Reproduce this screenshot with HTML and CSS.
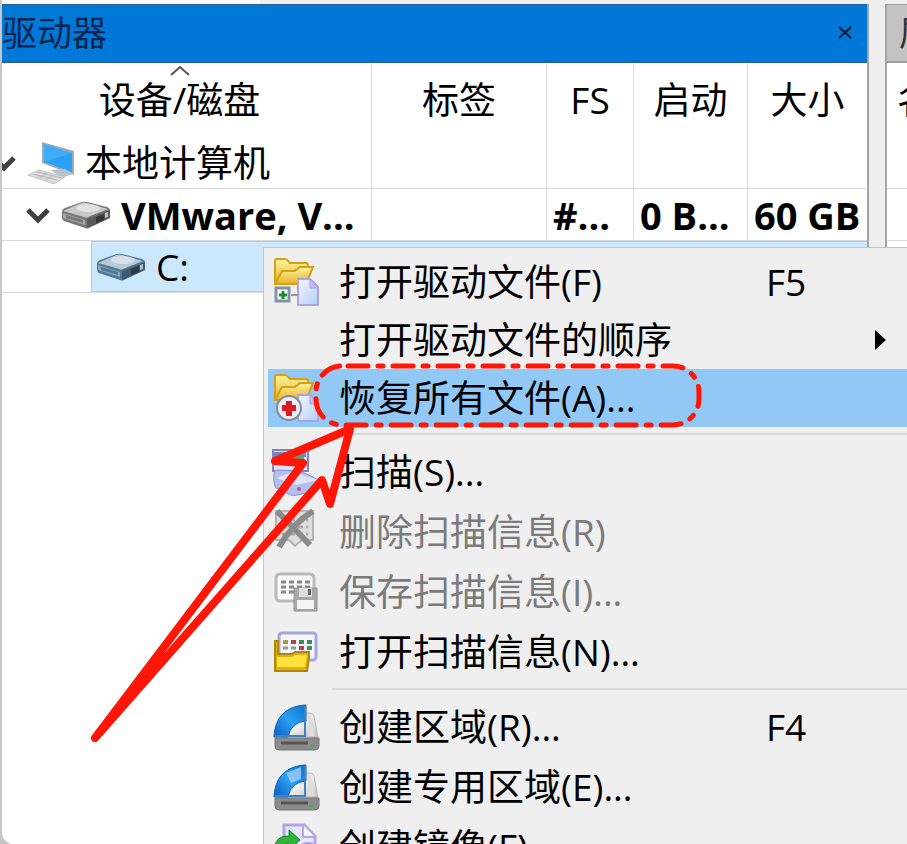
FILE: index.html
```html
<!DOCTYPE html>
<html lang="zh-CN">
<head>
<meta charset="utf-8">
<title>驱动器</title>
<link rel="stylesheet" href="styles.css">
</head>
<body>
<svg class="defs" aria-hidden="true">
  <defs>
    <linearGradient id="gold" x1="0" y1="0" x2="0" y2="1"><stop offset="0" stop-color="#fff3a0"/><stop offset="1" stop-color="#e6b325"/></linearGradient>
    <linearGradient id="paper" x1="0" y1="0" x2="1" y2="1"><stop offset="0" stop-color="#f4f6ff"/><stop offset="1" stop-color="#b4cdf5"/></linearGradient>
    <linearGradient id="blue" x1="0" y1="1" x2="1" y2="0"><stop offset="0" stop-color="#0a5cc0"/><stop offset=".5" stop-color="#2ba0f2"/><stop offset="1" stop-color="#0a6fd0"/></linearGradient>
    <linearGradient id="steel" x1="0" y1="0" x2="1" y2="1"><stop offset="0" stop-color="#a8a8a8"/><stop offset=".5" stop-color="#f0f0f0"/><stop offset="1" stop-color="#bcbcbc"/></linearGradient>
    <symbol id="drive" viewBox="0 0 50 28">
      <path d="M1 11Q1 8 4 7L18 2Q22 0 26 1L46 6Q49 7 49 9V17L28 27Q26 28 24 27L3 20Q1 19 1 17Z" fill="currentColor"/>
      <path d="M2 10 20 2Q23 1 26 2L47 8 27 16Q25 17 23 16Z" fill="#fff" fill-opacity=".6"/>
      <ellipse cx="27" cy="7" rx="12" ry="4" fill="#fff" fill-opacity=".45"/>
      <path d="m2 12 22 7v5L2 17Z" fill="#fff" fill-opacity=".35"/>
      <path d="m5 14 17 5v3L5 17Z" fill="currentColor"/>
      <path d="m26 18 23-9v8l-23 10Z" fill="#222" fill-opacity=".35"/>
      <path d="m35 16 8-3v6l-8 3Z" fill="#222" fill-opacity=".6"/>
      <path d="m44 12 3-1v5l-3 1Z" fill="#fff" fill-opacity=".6"/>
    </symbol>
    <symbol id="folder" viewBox="0 0 48 48">
      <path d="M3 25V3q0-2 2-2h8q2 0 3 2l2 2h16q2 0 2 3v6" fill="url(#gold)" stroke="#d4a017" stroke-width="2"/>
      <path d="M3 26 10 13h13l5-4h13l-7 17Z" fill="url(#gold)" stroke="#d4a017" stroke-width="2"/>
      <path d="M26 21h12l8 8v18H26Z" fill="url(#paper)" stroke="#a9a4e2" stroke-width="2" stroke-linejoin="round"/>
      <path d="m38 21 8 9h-8Z" fill="#c8b9f0" stroke="#a9a4e2"/>
    </symbol>
    <symbol id="region" viewBox="0 0 48 48">
      <path d="M7 35 14 12q1-2 3-2h21q3 0 4 3l4 22Z" fill="url(#steel)" stroke="#b6b6b6"/>
      <path d="M36 13h3l4 20h-7Z" fill="#ddd"/>
      <path d="M3 35h44v8q0 4-4 4H7q-4 0-4-4Z" fill="#8b8b8b" stroke="#777"/>
      <path d="M9 40h27" stroke="#555" stroke-width="3"/>
      <path d="M38 43h4" stroke="#35b548" stroke-width="2"/>
      <path d="M2 34C3 14 14 3 34 2V18Q19 19 16 34Z" fill="url(#blue)" stroke="#0b63bc" stroke-width="1"/>
      <path d="M33 3v30H3" fill="none" stroke="#3b83c3" stroke-width="2"/>
    </symbol>
  </defs>
</svg>
<main class="app">
  <section class="panel drives" aria-label="驱动器">
    <header class="title">
      <h1>驱动器</h1>
      <button class="close" aria-label="关闭"><svg width="16" height="16" viewBox="0 0 16 16"><path d="m2 2 12 11M14 2 2 13" stroke="#08152c" stroke-width="2"/></svg></button>
    </header>
    <table>
      <colgroup><col class="c-name"><col class="c-label"><col class="c-fs"><col class="c-boot"><col class="c-size"></colgroup>
      <thead>
        <tr>
          <th><svg class="sort" width="20" height="11" viewBox="0 0 20 11"><path d="m1 10 9-8 9 8" fill="none" stroke="#555" stroke-width="2"/></svg>设备/磁盘</th>
          <th>标签</th><th>FS</th><th>启动</th><th>大小</th>
        </tr>
      </thead>
      <tbody>
        <tr>
          <td><div class="node root">
            <svg class="chev" width="26" height="18" viewBox="0 0 26 18"><path d="m3 4 10 10L23 4" fill="none" stroke="#404040" stroke-width="5"/></svg>
            <svg width="48" height="44" viewBox="0 0 48 44">
              <path d="M15 1 47 10v24L15 22Z" fill="#9fa9b3"/>
              <path d="m17 3 28 9v19L17 21Z" fill="#2aa0f5"/>
              <path d="m17 3 28 9-28 9Z" fill="#62bdfc" fill-opacity=".4"/>
              <path d="m24 29 14-1 8 5-12 4Z" fill="#b6c4ce"/>
              <path d="m1 34 11-5 26 7-11 7Z" fill="#dcdcdc" stroke="#c4c4c4"/>
              <path d="m6 33 24 6m-20-8 25 6M12 37l8-5m-1 7 8-5" stroke="#b8b8b8" stroke-width="1"/>
            </svg>
            <span>本地计算机</span></div></td>
          <td></td><td></td><td></td><td></td>
        </tr>
        <tr class="disk">
          <td><div class="node disk-node">
            <svg class="chev" width="26" height="18" viewBox="0 0 26 18"><path d="m3 4 10 10L23 4" fill="none" stroke="#404040" stroke-width="5"/></svg>
            <svg class="gray" width="50" height="28"><use href="#drive"/></svg>
            <span>VMware, V...</span></div></td>
          <td></td><td>#...</td><td>0 B...</td><td>60 GB</td>
        </tr>
        <tr class="selected">
          <td><div class="node volume">
            <svg class="steel" width="50" height="28"><use href="#drive"/></svg>
            <span>C:</span></div></td>
          <td></td><td></td><td></td><td></td>
        </tr>
      </tbody>
    </table>
  </section>
  <section class="panel props" aria-label="属性">
    <header class="title"><h2>属性</h2></header>
    <div class="prop-head">名称</div>
    <div class="prop-row"></div>
  </section>

  <menu class="context">
    <li class="tight"><button><svg width="48" height="48" viewBox="0 0 48 48"><use href="#folder"/><path d="M4 30h13v13H4Z" fill="#fff" stroke="#8292a8" stroke-width="3"/><path d="M7 37h8m-4-4v8" stroke="#208a30" stroke-width="3"/><path d="M19 37h7" stroke="#999" stroke-width="2"/></svg><span>打开驱动文件(F)</span><kbd>F5</kbd></button></li>
    <li class="tight"><button><i></i><span>打开驱动文件的顺序</span><svg class="more" width="12" height="20" viewBox="0 0 12 20"><path d="M0 0 11 10 0 20Z"/></svg></button></li>
    <li class="tight"><button class="active"><svg width="48" height="48" viewBox="0 0 48 48"><use href="#folder"/><circle cx="17" cy="34" r="12" fill="#ececf2" stroke="#858ba5" stroke-width="2"/><path d="M14 27h6v4h4v6h-4v5h-6v-5h-4v-6h4Z" fill="#d81c20"/></svg><span>恢复所有文件(A)...</span></button></li>
    <li class="sep"></li>
    <li><button><svg width="48" height="48" viewBox="0 0 48 48"><path d="M1 2h35v21H1Z" fill="#dbe2fa" stroke="#8184b4" stroke-width="2"/><path d="M2 4h32v5H2Z" fill="#7384c5"/><path d="M20 10h12" stroke="#51a860" stroke-width="3"/><path d="M2 25q0-3 4-3l22 1 19 9q1 9-4 11l-22 5-17-8Q1 35 2 25Z" fill="#b3bfec" stroke="#8494ce"/><path d="m4 30 16-6 27 8-23 5Z" fill="#dde4fb"/><circle cx="27" cy="41" r="2" fill="#c65575"/></svg><span>扫描(S)...</span></button></li>
    <li><button disabled><svg width="48" height="48" viewBox="0 0 48 48"><path d="M4 3h37v29H30l-7 6-6-6H4Z" fill="#ddd" stroke="#b4b4b4" stroke-width="2"/><path d="M10 12h26M10 19h26M10 26h26" stroke="#aaa" stroke-width="3" stroke-dasharray="5 3"/><path d="M5 3 38 37M41 3Q20 16 7 39" fill="none" stroke="#8b8b8b" stroke-width="6"/></svg><span>删除扫描信息(R)</span></button></li>
    <li><button disabled><svg width="48" height="48" viewBox="0 0 48 48"><rect x="4" y="6" width="38" height="27" rx="4" fill="#f8f8f8" stroke="#bababa" stroke-width="3"/><path d="M9 14h29M9 19h29M9 24h15" stroke="#888" stroke-width="3" stroke-dasharray="5 3"/><path d="M22 20h23v23H22Z" fill="#a8a8a8" stroke="#929292"/><path d="M27 20h13v9H27Z" fill="#ddd"/><path d="M36 21h3v6h-3Z" fill="#666"/><path d="M25 32h17v9H25Z" fill="#f3f3f3"/></svg><span>保存扫描信息(I)...</span></button></li>
    <li><button><svg width="48" height="48" viewBox="0 0 48 48"><rect x="7" y="5" width="37" height="27" rx="3" fill="#f4f5ff" stroke="#a6a7dc" stroke-width="3"/><path d="M11 14h28" stroke="#b09a4a" stroke-width="4" stroke-dasharray="5 3"/><path d="M11 20h28" stroke="#999b74" stroke-width="3" stroke-dasharray="5 3"/><path d="M19 14h5m3 6h5" stroke="#b93e4b" stroke-width="4"/><path d="M27 14h5m3 0h5m-5 6h5" stroke="#359349" stroke-width="4"/><path d="M3 43V13h3v13h14l3-2h14v7l-2 12Z" fill="#e2b00b" stroke="#ad8713" stroke-width="2"/><path d="M5 29h15l3-2h12l-2 12H5Z" fill="#fce13d"/></svg><span>打开扫描信息(N)...</span></button></li>
    <li class="sep"></li>
    <li><button><svg width="48" height="48"><use href="#region"/></svg><span>创建区域(R)...</span><kbd>F4</kbd></button></li>
    <li><button><svg width="48" height="48" viewBox="0 0 48 48"><use href="#region"/><path d="M14 10 29 4v12l-10 4Z" fill="#a7d4fa" fill-opacity=".75"/></svg><span>创建专用区域(E)...</span></button></li>
    <li><button><svg width="48" height="48" viewBox="0 0 48 48"><path d="M12 2h20l11 11v33H12Z" fill="#e5e8ff" stroke="#b6a4e9" stroke-width="3"/><path d="M31 2v12h12" fill="#f8f5ff" stroke="#b6a4e9" stroke-width="2"/><circle cx="36" cy="32" r="12" fill="#d5ccf8" stroke="#a99be0" stroke-width="2"/><path d="M2 26Q4 12 17 13V7l11 10-11 10v-6q-8-1-11 9Z" fill="#30b43a" stroke="#15852a"/></svg><span>创建镜像(F)</span></button></li>
  </menu>

  <svg class="marks" width="720" height="760" viewBox="0 0 720 760" aria-hidden="true">
    <rect x="316" y="366" width="383" height="59" rx="26" stroke-width="5" stroke-dasharray="20 10 5 10" stroke-dashoffset="-6"/>
    <path d="M95 738 303 463 275 461 350 429 330 504 322 480Z" stroke-width="8"/>
  </svg>
</main>
</body>
</html>
```
FILE: styles.css
```css
* { box-sizing: border-box; }
body {
  margin: 0;
  background: #c6c6c6;
  color: #000;
  font: 37px/50px "Open Sans", "Noto Sans CJK SC", sans-serif;
  overflow: hidden;
}
.defs { position: absolute; width: 0; height: 0; }
.app {
  position: relative;
  display: flex;
  gap: 16px;
  min-height: 100vh;
  margin-left: 2px;
  padding-top: 4px;
  background: #efefef;
  border-bottom-left-radius: 12px;
  overflow: hidden;
}
.app::before {
  content: "";
  position: absolute;
  top: 0;
  left: 0;
  width: 258px;
  height: 4px;
  background: #fdfafc;
}
.panel { background: #fff; }
.drives { flex: 1; min-width: 0; border-right: 2px solid #a5a5a5; }
.props { width: 22px; border-left: 2px solid #a5a5a5; overflow: hidden; white-space: nowrap; }
.title {
  display: flex;
  align-items: center;
  justify-content: space-between;
  height: 59px;
  padding-right: 14px;
  background: #0078d7;
  border-top: 1px solid #28659a;
  border-bottom: 2px solid #28659a;
}
h1, h2 { margin: 0; font-size: 35px; font-weight: 400; color: #08264d; }
.props .title { background: #c3c3c3; border-color: #a0a0a0; padding-left: 12px; }
.props h2 { color: #333; }
.close { display: flex; padding: 0; border: 0; background: none; }
table { width: 100%; table-layout: fixed; border-collapse: separate; border-spacing: 0; }
.c-name { width: 370px; }
.c-label { width: 175px; }
.c-fs { width: 87px; }
.c-boot { width: 114px; }
.c-size { width: auto; }
th, td { padding: 0 0 0 6px; text-align: left; white-space: nowrap; overflow: hidden; border-right: 1px solid #d9d9d9; }
th:last-child, td:last-child { border-right: 0; }
th { position: relative; height: 74px; padding: 0; font-weight: 400; text-align: center; }
th:first-child { padding-right: 14px; }
td { height: 52px; border-bottom: 1px solid #d9d9d9; }
td:first-child { padding-left: 0; }
.sort { position: absolute; top: 2px; left: 50%; margin-left: -17px; }
.disk { font-size: 38px; font-weight: 700; }
.node { display: flex; align-items: center; height: 51px; }
.root { gap: 10px; margin-left: -11px; }
.disk-node { gap: 10px; padding-left: 23px; }
.volume { gap: 10px; margin-left: 89px; padding-left: 4px; background: #cce8ff; border: 1px solid #99d1ff; border-right: 0; }
.selected td { border-right: 0; }
.selected td:not(:first-child) { background: #cce8ff; border-top: 1px solid #99d1ff; }
.gray { color: #777; }
.steel { color: #4f7896; }
.prop-head { height: 126px; padding: 12px 0 0 10px; border-bottom: 1px solid #d9d9d9; }
.prop-row { height: 52px; border-bottom: 1px solid #d9d9d9; }
.context {
  position: absolute;
  top: 247px;
  left: 261px;
  right: 0;
  margin: 0;
  padding: 5px 0 0 4px;
  list-style: none;
  background: #efefef;
  border: 1px solid #c4c4c4;
  border-right: 0;
}
.context button {
  display: flex;
  align-items: center;
  width: 100%;
  height: 60px;
  padding: 0 20px 0 4px;
  border: 0;
  background: none;
  color: #000;
  font: inherit;
  text-align: left;
}
.context .tight button { height: 58px; }
.context .active { background: #91c8f6; }
.context button:disabled { color: #7b7b7b; }
.context i, .context button > svg:first-child { flex: none; width: 48px; height: 48px; }
.context span { flex: 1; margin-left: 19px; white-space: nowrap; }
kbd { width: 121px; font: inherit; }
.sep { height: 15px; margin-left: 64px; padding-top: 6px; }
.sep::before { content: ""; display: block; height: 2px; background: #d8d8d8; }
.marks { position: absolute; top: 0; left: -2px; }
.marks * { fill: none; stroke: #ff1607; stroke-linecap: round; stroke-linejoin: round; }
```
